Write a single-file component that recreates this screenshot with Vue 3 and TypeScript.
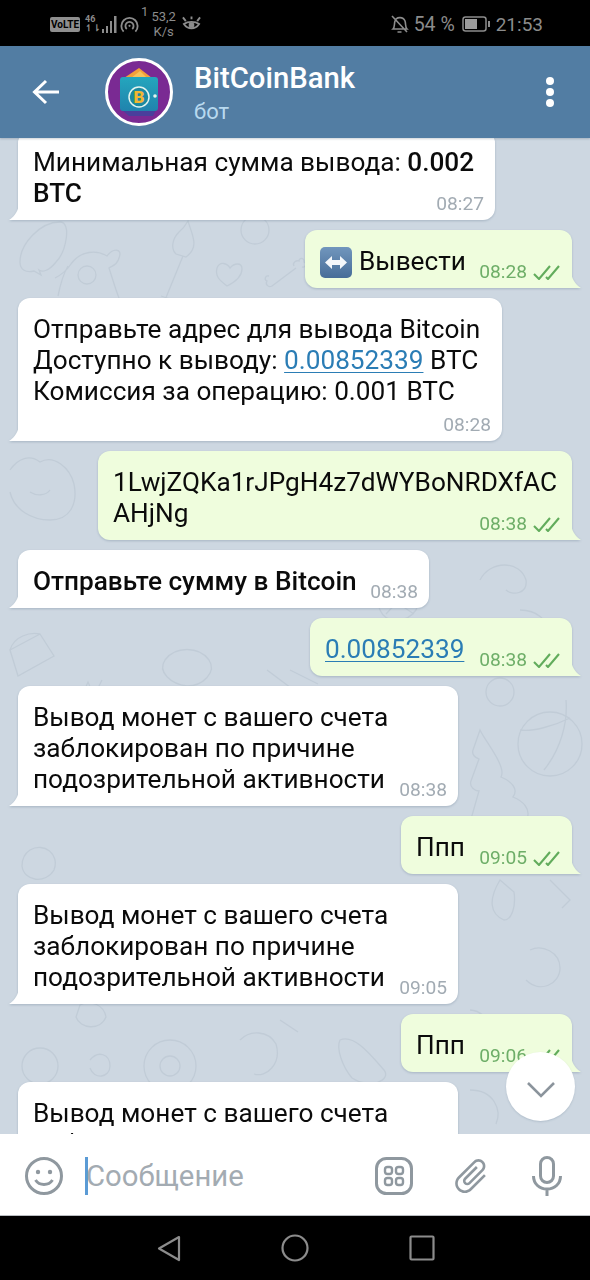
<script setup lang="ts">
interface Part {
  text: string;
  bold?: boolean;
  link?: boolean;
}

interface Message {
  out?: boolean;
  width: number;
  lines: Part[][];
  time: string;
  stacked?: boolean;
  emoji?: boolean;
}

const blocked: Part[][] = [
  [{ text: 'Вывод монет с вашего счета' }],
  [{ text: 'заблокирован по причине' }],
  [{ text: 'подозрительной активности' }],
];

const messages: Message[] = [
  {
    width: 477,
    lines: [
      [{ text: 'Минимальная сумма вывода: ' }, { text: '0.002', bold: true }],
      [{ text: 'BTC', bold: true }],
    ],
    time: '08:27',
  },
  { out: true, width: 267, emoji: true, lines: [[{ text: 'Вывести' }]], time: '08:28' },
  {
    width: 484,
    stacked: true,
    lines: [
      [{ text: 'Отправьте адрес для вывода Bitcoin' }],
      [{ text: 'Доступно к выводу: ' }, { text: '0.00852339', link: true }, { text: ' BTC' }],
      [{ text: 'Комиссия за операцию: 0.001 BTC' }],
    ],
    time: '08:28',
  },
  {
    out: true,
    width: 474,
    lines: [[{ text: '1LwjZQKa1rJPgH4z7dWYBoNRDXfAC' }], [{ text: 'AHjNg' }]],
    time: '08:38',
  },
  { width: 411, lines: [[{ text: 'Отправьте сумму в Bitcoin', bold: true }]], time: '08:38' },
  { out: true, width: 262, lines: [[{ text: '0.00852339', link: true }]], time: '08:38' },
  { width: 440, lines: blocked, time: '08:38' },
  { out: true, width: 171, lines: [[{ text: 'Ппп' }]], time: '09:05' },
  { width: 440, lines: blocked, time: '09:05' },
  { out: true, width: 171, lines: [[{ text: 'Ппп' }]], time: '09:06' },
  { width: 440, lines: blocked, time: '' },
];
</script>

<template>
  <div class="phone">
    <div class="status">
      <div class="status-left">
        <span class="volte">VoLTE</span>
        <span class="net"><i>46</i><i>↿⇂</i></span>
        <svg class="bars" width="15" height="19" viewBox="0 0 15 19">
          <path d="M0 14h2v4H0zM4 11h2v7H4zM8 6h2v12H8zM12 1h2.500v17H12z" fill="#8c8c8c" />
        </svg>
        <svg class="hotspot" width="19" height="20" viewBox="0 0 21 21" fill="none" stroke="#8c8c8c" stroke-width="2">
          <path d="M4 19a9 9 0 1 1 13 0M7.500 16a4.500 4.500 0 1 1 6 0" />
          <circle cx="10.500" cy="12.500" r="1.200" fill="#8c8c8c" stroke="none" />
        </svg>
        <span class="one">1</span>
        <span class="speed">53,2<br />K/s</span>
        <svg class="eye" width="19" height="19" viewBox="0 0 20 19" fill="none" stroke="#8c8c8c" stroke-width="2">
          <path d="M2 9c4-3 12-3 16 0-4 6-12 6-16 0zM1 2l3 4M19 2l-3 4M10 1v3" />
          <circle cx="10" cy="10" r="3" fill="#8c8c8c" stroke="none" />
        </svg>
      </div>
      <div class="status-right">
        <svg width="19" height="20" viewBox="0 0 19 20" fill="none" stroke="#8c8c8c" stroke-width="1.600">
          <path d="M3 15c2-2 1-5 2-8 1-4 8-5 10 0 1 3 0 6 2 8zM7.500 18h4M2 2l15 16" />
        </svg>
        <span class="percent">54 %</span>
        <svg width="28" height="16" viewBox="0 0 28 16">
          <rect x="1" y="1" width="23" height="14" rx="2.500" fill="none" stroke="#8c8c8c" stroke-width="1.500" />
          <rect x="3" y="3" width="12" height="10" fill="#9c9c9c" />
          <rect x="26" y="5" width="2" height="6" fill="#8c8c8c" />
        </svg>
        <span class="clock">21:53</span>
      </div>
    </div>

    <header class="topbar">
      <svg class="back" width="28" height="26" viewBox="0 0 28 26" fill="none" stroke="#fff" stroke-width="3">
        <path d="M27 13H3M14 2 2.500 13 14 24" />
      </svg>
      <svg class="avatar" width="68" height="68" viewBox="0 0 68 68">
        <defs>
          <linearGradient id="wallet" x1="0" y1="0" x2="0" y2="1">
            <stop offset="0" stop-color="#24a6bd" />
            <stop offset="1" stop-color="#2083ad" />
          </linearGradient>
        </defs>
        <circle cx="34" cy="34" r="32.500" fill="#7a2a93" stroke="#fff" stroke-width="3" />
        <path d="M17 52h34l-3 6H24z" fill="#4a3f9c" />
        <path d="M19 20 34 10l13 10z" fill="#f2a03a" />
        <path d="M26 20 35 13l7 7z" fill="#f7c25a" />
        <rect x="15" y="19" width="38" height="34" rx="3" fill="url(#wallet)" />
        <circle cx="34" cy="39" r="10" fill="#1b8aa0" stroke="#e3f4ef" stroke-width="1.500" />
        <text x="34" y="45" class="coin" text-anchor="middle">B</text>
        <circle cx="50" cy="38" r="1.800" fill="#e3f4ef" />
      </svg>
      <div class="peer">
        <div class="peer-name">BitCoinBank</div>
        <div class="peer-sub">бот</div>
      </div>
      <div class="dots"><i /><i /><i /></div>
    </header>

    <main class="chat">
      <svg class="doodles" width="590" height="996" viewBox="0 138 590 996" fill="none" stroke="#c1ccd7" stroke-width="1.300">
        <path d="M20 262c0-18 20-40 40-40 12 0 6 30-4 40-8 10-14 10-17 8l2 5-7-4c-8 2-14-1-14-9z" />
        <path d="M55 278c8-4 12-8 16-14 10-14 26-14 36-8 6-8 16-8 12 2-2 8-8 8-10 10 4 12 6 20 10 30M68 266c-6 10-8 20-10 30" />
        <circle cx="87" cy="275" r="9" />
        <path d="M165 300l18-44M176 254c-6-6-3-16 3-22 5-4 9-11 9-11 4 14 12 26-2 36zM161 296l12 4" />
        <path d="M227 286c-8-6-12-10-10-18 3-7 10-5 13 0 4-5 12-6 12 1 0 7-7 13-15 17z" />
        <path d="M272 286l24-18m-24 18c-4 2-7-2-5-5-3-1-2-6 2-5m25-10c-2-3 2-6 5-5 0-4 6-3 5 1 3 1 2 6-2 5" />
        <circle cx="255" cy="230" r="14" />
        <path d="M10 470c8-12 20-16 30-8 14-8 30 6 34 22 4 20-4 36-24 36-18 0-36-10-40-28" />
        <path d="M30 492c6 4 16 4 20-2" />
        <path d="M380 610c-8-16 0-34 18-36 20 2 26 20 18 36-10 14-30 14-36 0zM384 594l30 20M412 586l-26 28M400 566l-4 10M388 556l8 14M408 556l-8 14" />
        <path d="M480 580c10-20 40-20 46 0 2 14-14 16-20 10M520 610c16 0 30 10 26 24" />
        <path d="M10 650l30-16 14 22-36 20zM10 650c4-14 20-18 30-16" />
        <path d="M165 660c10-14 34-14 44 0 8 12-6 26-22 26-16-2-30-14-22-26zM190 686l-8 30" />
        <path d="M80 700l8-18 6 14 8-16" />
        <path d="M267 670l40 30M290 670l28 14" />
        <path d="M480 730l-7 20c-2 6 4 8 6 9l-8 22c-2 6 4 10 8 10l-8 28h56c4-10-4-18-14-22 6-8-2-16-12-20 6-10-16-36-21-47z" />
        <circle cx="550" cy="744" r="32" />
        <path d="M566 700c2 24-6 50-22 70M520 730c12 2 34-4 50-12" />
        <circle cx="500" cy="692" r="14" />
        <path d="M500 880c-12 20-10 34 4 40 8 0 12-14 10-28zM550 880l20 20-8 8" />
        <circle cx="40" cy="1066" r="18" />
        <circle cx="170" cy="1066" r="26" />
        <circle cx="170" cy="1066" r="10" />
        <path d="M240 1040c10-10 28-10 36 4 6 20-10 34-22 30M90 1060c8-10 20-6 20 6s-16 14-20 2" />
        <path d="M340 1040c14-6 30 14 44 30 8 10-14 20-32 8-10-12-16-30-12-38z" />
        <path d="M470 1090c24 0 32 20 26 34" />
        <path d="M30 850c14-8 30 4 24 20-8 14-30 12-32-4 0-6 2-12 8-16zM530 950c12-6 30 2 30 18s-20 26-34 12" />
        <path d="M80 1005c10-6 24 0 26 12-6 14-26 12-30 0zM330 960c10-8 30-2 30 14" />
        <path d="M470 1010c10 0 20 10 20 20M280 1020l18 12" />
      </svg>

      <div class="messages">
        <div
          v-for="(m, i) in messages"
          :key="i"
          class="bubble"
          :class="m.out ? 'out' : 'in'"
          :style="{ width: `${m.width}px` }"
        >
          <div class="text">
            <div v-for="(line, j) in m.lines" :key="j" class="line">
              <svg v-if="m.emoji" class="emoji" width="32" height="31" viewBox="0 0 32 31">
                <defs>
                  <linearGradient id="key" x1="0" y1="0" x2="0" y2="1">
                    <stop offset="0" stop-color="#7196bd" />
                    <stop offset="1" stop-color="#476d98" />
                  </linearGradient>
                </defs>
                <rect width="32" height="31" rx="5" fill="url(#key)" />
                <path d="M5 15.500l7-6.500v4h8V9l7 6.500-7 6.500v-4h-8v4z" fill="#f4f7fa" />
              </svg>
              <template v-for="(p, k) in line" :key="k">
                <a v-if="p.link" class="link">{{ p.text }}</a>
                <b v-else-if="p.bold">{{ p.text }}</b>
                <span v-else>{{ p.text }}</span>
              </template>
            </div>
          </div>
          <div v-if="m.time" class="meta" :class="{ stacked: m.stacked }">
            <span>{{ m.time }}</span>
            <svg v-if="m.out" width="27" height="15" viewBox="0 0 27 15" fill="none" stroke="#62ac5c" stroke-width="2.100">
              <path d="M1 9l5 5L17 1M13 12l2 2L26 1" />
            </svg>
          </div>
        </div>
      </div>

      <button class="to-bottom">
        <svg width="30" height="18" viewBox="0 0 30 18" fill="none" stroke="#8b949c" stroke-width="2.600">
          <path d="M2 2l13 13L28 2" />
        </svg>
      </button>
    </main>

    <footer class="composer">
      <svg class="smile" width="38" height="38" viewBox="0 0 38 38" fill="none" stroke="#8f989f" stroke-width="3">
        <circle cx="19" cy="19" r="17.500" />
        <path d="M10.500 23c4 6 13 6 17 0" />
        <circle cx="13" cy="15" r="2.200" fill="#8f989f" stroke="none" />
        <circle cx="25" cy="15" r="2.200" fill="#8f989f" stroke="none" />
      </svg>
      <div class="field"><span class="caret" /><span class="placeholder">Сообщение</span></div>
      <svg class="cmd" width="38" height="38" viewBox="0 0 38 38" fill="none" stroke="#8f989f" stroke-width="3">
        <rect x="1.500" y="1.500" width="35" height="35" rx="10" />
        <rect x="10" y="10" width="7" height="7" rx="2.500" stroke-width="2.400" />
        <rect x="21" y="10" width="7" height="7" rx="2.500" stroke-width="2.400" />
        <rect x="10" y="21" width="7" height="7" rx="2.500" stroke-width="2.400" />
        <rect x="21" y="21" width="7" height="7" rx="2.500" stroke-width="2.400" />
      </svg>
      <svg class="clip" width="42" height="42" viewBox="0 0 24 24" fill="#8f989f">
        <path
          transform="rotate(45 12 12)"
          d="M16.500 6v11.500c0 2.210-1.790 4-4 4s-4-1.790-4-4V5c0-1.380 1.120-2.500 2.500-2.500s2.500 1.120 2.500 2.500v10.500c0 .55-.45 1-1 1s-1-.45-1-1V6H10v9.500c0 1.380 1.120 2.500 2.500 2.500s2.500-1.120 2.500-2.500V5c0-2.210-1.790-4-4-4S7 2.790 7 5v12.500c0 3.040 2.460 5.500 5.500 5.500s5.500-2.460 5.500-5.500V6h-1.500z"
        />
      </svg>
      <svg class="mic" width="30" height="40" viewBox="0 0 30 40" fill="none" stroke="#8f989f" stroke-width="3">
        <rect x="8.500" y="1.500" width="13" height="25" rx="6.500" />
        <path d="M1.500 20c0 8 6 13 13.500 13s13.500-5 13.500-13M15 33v7" />
      </svg>
    </footer>

    <nav class="navbar">
      <svg width="24" height="27" viewBox="0 0 24 27" fill="none" stroke="#8c8c8c" stroke-width="2.200">
        <path d="M22 2 2 13.500 22 25z" stroke-linejoin="round" />
      </svg>
      <svg width="28" height="28" viewBox="0 0 28 28" fill="none" stroke="#8c8c8c" stroke-width="2.200">
        <circle cx="14" cy="14" r="12.500" />
      </svg>
      <svg width="26" height="26" viewBox="0 0 26 26" fill="none" stroke="#8c8c8c" stroke-width="2.200">
        <rect x="1.500" y="1.500" width="23" height="23" rx="1" />
      </svg>
    </nav>
  </div>
</template>

<style scoped>
.phone {
  display: flex;
  flex-direction: column;
  width: 590px;
  height: 1280px;
  overflow: hidden;
  font-family: Roboto, 'Noto Sans', sans-serif;
  color: #0b0b0b;
}

.status {
  display: flex;
  align-items: center;
  justify-content: space-between;
  height: 46px;
  flex: none;
  box-sizing: border-box;
  padding: 2px 47px 0 50px;
  background: #000;
  color: #8c8c8c;
}

.status-left,
.status-right {
  display: flex;
  align-items: center;
}

.volte {
  padding: 0 1px;
  border-radius: 2px;
  background: #8f8f8f;
  color: #000;
  font-size: 10px;
  font-weight: 700;
  line-height: 15px;
}

.net {
  display: flex;
  flex-direction: column;
  margin-left: 5px;
  font-size: 9px;
  font-weight: 700;
  line-height: 9px;
}

.net i {
  font-style: normal;
}

.bars {
  margin-left: 1px;
}

.hotspot {
  margin-left: 3px;
}

.one {
  align-self: flex-start;
  margin: -4px 0 0 2px;
  font-size: 13px;
  line-height: 14px;
}

.speed {
  margin-left: 3px;
  font-size: 13px;
  line-height: 15px;
  text-align: center;
}

.eye {
  margin-left: 6px;
}

.status-right .percent {
  margin: 0 7px 0 5px;
  font-size: 19.500px;
}

.clock {
  margin-left: 6px;
  font-size: 19px;
}

.topbar {
  display: flex;
  align-items: center;
  height: 92px;
  flex: none;
  padding-left: 32px;
  background: #527da3;
  box-shadow: 0 1px 2px rgba(50, 70, 90, 0.25);
  position: relative;
  z-index: 2;
}

.avatar {
  margin-left: 45px;
}

.coin {
  fill: #f2b632;
  font-family: Roboto, sans-serif;
  font-size: 17px;
  font-weight: 900;
}

.peer {
  flex: 1;
  margin-left: 21px;
  padding-top: 5px;
}

.peer-name {
  color: #fff;
  font-size: 29.300px;
  font-weight: 500;
  line-height: 34px;
}

.peer-sub {
  color: #b8d9ef;
  font-size: 22px;
  line-height: 34px;
}

.dots {
  display: flex;
  flex-direction: column;
  gap: 3px;
  margin-right: 36px;
}

.dots i {
  width: 8px;
  height: 8px;
  border-radius: 50%;
  background: #fff;
}

.chat {
  flex: 1;
  min-height: 0;
  position: relative;
  overflow: hidden;
  background: #cdd7e1;
}

.doodles {
  position: absolute;
  top: 0;
  left: 0;
}

.messages {
  position: relative;
  display: flex;
  flex-direction: column;
  gap: 10px;
  margin-top: -7px;
}

.bubble {
  position: relative;
  box-sizing: border-box;
  padding: 15.500px 12px 5px 15px;
  border-radius: 12px;
  background: #fff;
  filter: drop-shadow(0 1px 1px rgba(70, 95, 120, 0.28));
}

.bubble::before {
  content: '';
  position: absolute;
  bottom: 0;
  width: 12px;
  height: 18px;
  background: inherit;
}

.in {
  align-self: flex-start;
  margin-left: 18px;
  padding-right: 11px;
  border-bottom-left-radius: 0;
}

.in::before {
  left: -9px;
  clip-path: path('M10 0 C10 8 6 14 0 18 L12 18 L12 0 Z');
}

.out {
  align-self: flex-end;
  margin-right: 18px;
  background: #effddd;
  border-bottom-right-radius: 0;
}

.out::before {
  right: -9px;
  clip-path: path('M2 0 C2 8 6 14 12 18 L0 18 L0 0 Z');
}

.text {
  font-size: 26.200px;
  line-height: 31px;
  white-space: nowrap;
}

.line {
  display: flex;
  align-items: center;
  height: 31px;
  white-space: pre;
}

.line b {
  font-weight: 500;
}

.emoji {
  margin: 2px 7px 0 0;
}

.link {
  color: #2b7db5;
  text-decoration: underline;
  text-underline-offset: 3px;
  text-decoration-thickness: 1px;
}

.meta {
  display: flex;
  align-items: center;
  justify-content: flex-end;
  gap: 6px;
  height: 22px;
  margin-top: -15.500px;
  color: #a2abb3;
  font-size: 19.200px;
  line-height: 22px;
}

.meta.stacked {
  margin-top: 7.500px;
}

.out .meta {
  color: #6eae68;
}

.to-bottom {
  position: absolute;
  top: 914px;
  left: 506px;
  display: grid;
  place-items: center;
  width: 69px;
  height: 69px;
  padding: 6px 0 0;
  border: 0;
  border-radius: 50%;
  background: #fff;
  box-shadow: 0 1px 2px rgba(70, 95, 120, 0.2);
}

.composer {
  display: flex;
  align-items: center;
  height: 82px;
  flex: none;
  box-sizing: border-box;
  padding: 3px 0 0 25px;
  background: #fff;
  border-bottom: 1px solid #b9bdc1;
}

.field {
  display: flex;
  align-items: center;
  flex: 1;
  margin-left: 22px;
}

.caret {
  width: 3px;
  height: 38px;
  background: #5b9bd5;
}

.placeholder {
  margin-left: -2px;
  color: #a3abb2;
  font-size: 29.300px;
}

.cmd {
  margin-right: 37px;
}

.clip {
  margin-right: 40px;
}

.mic {
  margin-right: 28px;
}

.navbar {
  display: flex;
  align-items: center;
  height: 64px;
  flex: none;
  padding-left: 157px;
  gap: 100px;
  background: #000;
}
</style>

<style>
html,
body {
  margin: 0;
  background: #000;
}
</style>
